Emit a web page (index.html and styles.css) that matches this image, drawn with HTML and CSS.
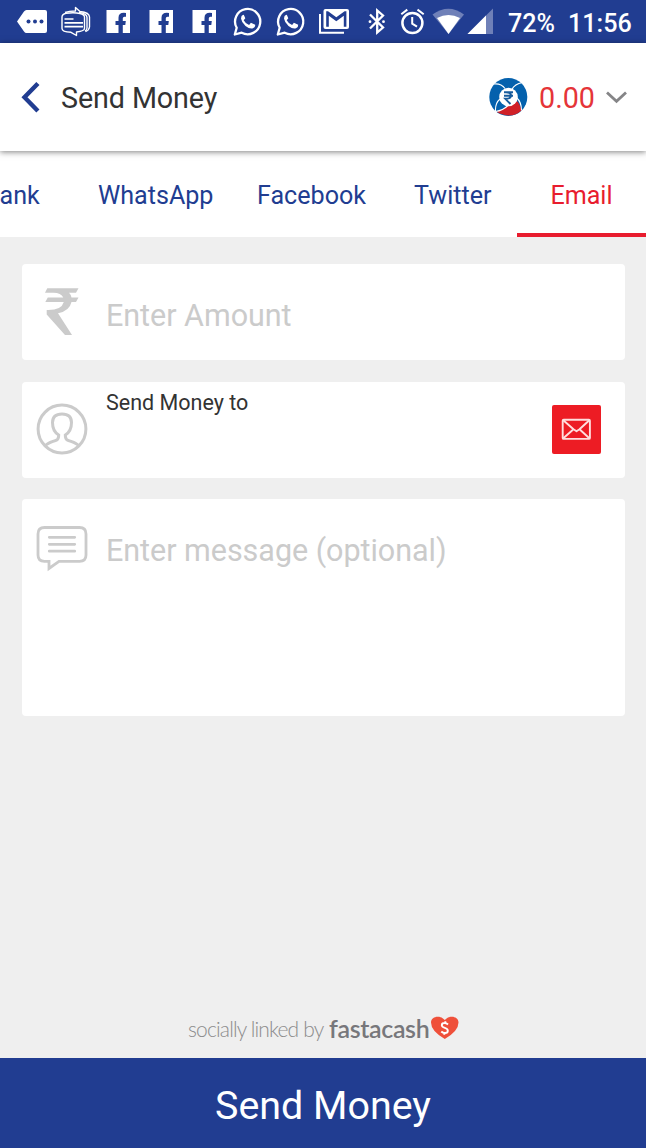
FILE: index.html
```html
<!DOCTYPE html>
<html lang="en">
<head>
<meta charset="utf-8">
<title>Send Money</title>
<link rel="stylesheet" href="styles.css">
</head>
<body>
<div class="screen">
  <div class="status-bar">
    <svg class="status-icon" width="43" height="43" viewBox="11 0 43 43"><path fill="#fff" d="M17 21.500L24 11.500Q25 10 26.500 10H45Q47 10 47 12V31Q47 33 45 33H26.500Q25 33 24 31.500Z"/><g fill="#213d91"><circle cx="28.500" cy="21.500" r="2"/><circle cx="35" cy="21.500" r="2"/><circle cx="41.500" cy="21.500" r="2"/></g></svg>
    <svg class="status-icon" width="43" height="43" viewBox="54 0 43 43"><g fill="none" stroke="#fff" stroke-width="1.400" stroke-linejoin="round"><path d="M65 12.500Q69 11 75.500 11V7.500L80 11.500Q89.500 12.500 89.500 17V27Q89 30.500 85.500 31.500"/><path d="M79 12.500Q87 13.500 87 17.500V28Q87 30 85 31"/><path d="M66 13.300Q74 12 80 13.500Q84.500 14.500 84.500 17V28.500Q84.500 31 76.500 32V35.500L71 32.300Q62 32 62 28.500V17Q62 14.300 66 13.300Z"/></g><path stroke="#fff" stroke-width="1.700" d="M64.500 19H73.500M64.500 22.800H83M64.500 26.600H83"/></svg>
    <svg class="status-icon" width="43" height="43" viewBox="97 0 43 43"><path id="fb" fill="#fff" fill-rule="evenodd" d="M106.500 10H130V33H122.800V25H125.300L125.800 21H122.800V18.300Q122.800 16.700 124.500 16.700H126V13Q118.500 12 118.500 17.800V21H115.500V25H118.500V33H106.500Z"/></svg>
    <svg class="status-icon" width="43" height="43" viewBox="97 0 43 43"><use href="#fb"/></svg>
    <svg class="status-icon" width="43" height="43" viewBox="97 0 43 43"><use href="#fb"/></svg>
    <svg class="status-icon" width="43" height="43" viewBox="226 0 43 43"><g id="wa"><path fill="none" stroke="#fff" stroke-width="2.300" stroke-linejoin="round" d="M234.800 34.500L236.700 27.800A12.600 12.600 0 1 1 241.700 32.700Z"/><path fill="#fff" d="M243.200 14.800Q241 15.500 241 18.600Q241.500 22.500 245.500 26Q250 29.500 253 28.300Q255.500 27.200 255.200 24.800L250.900 22.700L249.100 25Q245.500 23.700 243.700 20.200L245.300 18.300L243.900 14.900Z"/></g></svg>
    <svg class="status-icon" width="43" height="43" viewBox="226 0 43 43"><use href="#wa"/></svg>
    <svg class="status-icon" width="43" height="43" viewBox="312 0 43 43"><path fill="none" stroke="#fff" stroke-width="2" d="M320 14V32.700H344"/><rect x="323.500" y="9" width="25.500" height="20" rx="2" fill="#fff"/><path fill="#213d91" d="M326.200 11.200H328L336.300 17.300L344.600 11.200H346.400V26.800H343.800V15.700L336.300 21.200L328.800 15.700V26.800H326.200Z"/></svg>
    <svg class="status-icon" width="43" height="43" viewBox="355 0 43 43"><path fill="none" stroke="#fff" stroke-width="2.300" d="M370 14.500L383 27.500L377.200 32.500V10.500L383 15.500L370 28.500"/><circle cx="370" cy="21.700" r="1.400" fill="#fff"/><circle cx="383.500" cy="21.700" r="1.400" fill="#fff"/></svg>
    <svg class="status-icon" width="33" height="43" viewBox="398 0 33 43"><circle cx="412.400" cy="23" r="10" fill="none" stroke="#fff" stroke-width="2.500"/><path fill="none" stroke="#fff" stroke-width="2" d="M412.200 17V23.700L417 26.700M401.300 14.300L407.300 9.600M417.500 9.600L423.700 14.300"/></svg>
    <svg class="status-icon" width="35" height="43" viewBox="431 0 35 43"><path fill="#6f80b8" d="M432.500 14.500Q448.500 3 464 14.500L448.500 34Z"/><path fill="#fff" d="M437 18Q448.500 12 460 18L448.500 34Z"/></svg>
    <svg class="status-icon" width="32" height="43" viewBox="466 0 32 43"><path fill="#6f80b8" d="M493 8.500V34H467.500Z"/><path fill="#fff" d="M486 15.500V34H467.500Z"/></svg>
    <span class="battery">72%</span>
    <span class="clock">11:56</span>
  </div>

  <header class="app-bar">
    <svg class="back" width="20" height="32" viewBox="21 81 20 32"><path fill="none" stroke="#213d91" stroke-width="4.400" d="M37.900 83.500L24.500 97.300L37.900 111"/></svg>
    <h1 class="title">Send Money</h1>
    <div class="balance">
      <svg width="40" height="40" viewBox="488 77 40 40"><circle cx="508.300" cy="97" r="19" fill="#0461ad"/><path fill="#d02027" d="M496.500 111.800Q503 110 508 105.500L517 101Q520 104 521.500 110.500Q511 120 496.500 111.800Z"/><g fill="none" stroke="#fff" stroke-width="1.100"><path d="M493.500 84Q501 83 505 88.500M512 89.500Q514.500 84 522.500 82.500M516.500 97.500Q521.500 102 521.500 110.500M500 99Q495 103 495.500 111.500M508 105.500Q503 110.500 495.500 111.500"/></g><circle cx="508.500" cy="97" r="9.300" fill="#fff"/><path fill="none" stroke="#165b9c" stroke-width="1.900" d="M504 92.300H513M504 95.800H513M506 92.300Q511 92.500 511 95.500Q511 98.800 505.300 98.800L510.500 104"/></svg>
      <span class="balance-value">0.00</span>
      <svg class="chevron" width="22" height="14" viewBox="606 90 22 14"><path fill="none" stroke="#858587" stroke-width="2.800" d="M607 92.500L616.500 101.300L626 92.500"/></svg>
    </div>
  </header>

  <nav class="tabs">
    <span class="tab tab-cut">ank</span>
    <span class="tab tab-whatsapp">WhatsApp</span>
    <span class="tab tab-facebook">Facebook</span>
    <span class="tab tab-twitter">Twitter</span>
    <span class="tab tab-active">Email</span>
  </nav>

  <main class="form">
    <div class="card amount">
      <svg class="icon" width="54" height="52" viewBox="35 286 54 52"><path fill="#cbcbcb" d="M47.300 288.200H78.500L76 292.700H69Q71 294.600 71.500 297.500H78.500L76 302H71.500Q69.500 311 58 313.300L72 335H65L46.700 314.500V310Q61.500 310.500 63.800 302H45.300L47.800 297.500H63.300Q61 292.700 53.500 292.700H45Z"/></svg>
      <span class="placeholder">Enter Amount</span>
    </div>
    <div class="card recipient">
      <svg class="icon" width="54" height="54" viewBox="35 402.500 54 54"><g fill="none" stroke="#cbcbcb" stroke-width="3"><circle cx="62" cy="429.500" r="23.900"/><path d="M45.500 446C48 443 53 442.200 57 440.300Q58.700 439.300 58.700 435.500C54.500 433 52.500 428 52.500 423C52.500 417 56 414.500 62 414.500C68 414.500 71.500 417 71.500 423C71.500 428 69.500 433 65.300 435.500Q65.300 439.300 67 440.300C71 442.200 76 443 78.500 446"/></g></svg>
      <span class="label">Send Money to</span>
      <svg class="mail" width="49" height="49" viewBox="0 0 49 49"><rect width="49" height="49" rx="2" fill="#ed1c24"/><g fill="none" stroke="#ffdede" stroke-width="1.900" stroke-linejoin="round"><rect x="10.700" y="14.700" width="27.200" height="19.200" rx="1"/><path d="M11 15L21.500 24.300L24.500 26.300L27.500 24.300L37.600 15M11 33.500L21.500 24.300M27.500 24.300L37.600 33.500"/></g></svg>
    </div>
    <div class="card message">
      <svg class="icon" width="54" height="50" viewBox="35 524 54 50"><g fill="none" stroke="#cbcbcb" stroke-width="2.800"><path d="M44.500 527.500H79.500Q86 527.500 86 534V555Q86 561.300 79.500 561.300H59L49 568.500V561.300H44.500Q38 561.300 38 555V534Q38 527.500 44.500 527.500Z"/><path stroke-linecap="round" d="M49.300 537.300H74.700M49.300 544.300H74.700M49.300 551.200H74.700"/></g></svg>
      <span class="placeholder">Enter message (optional)</span>
    </div>
  </main>

  <div class="powered">
    <span class="linked-by">socially linked by</span>
    <span class="brand">fastacash</span>
    <svg class="heart" width="28" height="23" viewBox="431 1016 28 23"><path fill="#ef503a" d="M444.800 1039Q431 1031 431 1022.500C431 1016 440.500 1014.500 444.800 1020C449 1014.500 458.500 1016 458.500 1022.500Q458.500 1031 444.800 1039Z"/><path fill="none" stroke="#fff" stroke-width="1.900" d="M448 1024.500Q446.500 1023 444.500 1023Q441.800 1023 441.800 1025.300Q441.800 1027 444.800 1027.800Q447.800 1028.700 447.800 1030.700Q447.800 1033 445 1033Q442.700 1033 441.300 1031.500M445.300 1021.300V1023.500M444.300 1032.500V1034.800"/></svg>
  </div>

  <button class="send">Send Money</button>
</div>
</body>
</html>
```
FILE: styles.css
```css
* {
  box-sizing: border-box;
}

body {
  margin: 0;
  font-family: Roboto, "Liberation Sans", sans-serif;
}

svg {
  display: block;
  flex: none;
}

.screen {
  display: flex;
  flex-direction: column;
  width: 646px;
  height: 1148px;
  overflow: hidden;
  background: #efefef;
}

.status-bar {
  display: flex;
  flex: none;
  height: 43px;
  padding-left: 11px;
  background: #213d91;
  color: #fff;
  font-size: 25.100px;
  font-weight: 500;
  line-height: 47px;
  white-space: nowrap;
}

.battery {
  width: 60px;
  padding-left: 10px;
}

.clock {
  margin-left: 10px;
}

.app-bar {
  position: relative;
  display: flex;
  flex: none;
  align-items: center;
  height: 108px;
  padding: 0 18px 0 21px;
  background: #fff;
  box-shadow: 0 1px 6px rgba(0, 0, 0, 0.5);
}

.title {
  margin: 1px 0 0 20px;
  color: #333;
  font-size: 28.700px;
  font-weight: 400;
  letter-spacing: -0.100px;
}

.balance {
  display: flex;
  align-items: center;
  margin-left: auto;
}

.balance-value {
  margin: 2px 11px 0 11px;
  color: #e53538;
  font-size: 28.700px;
}

.tabs {
  display: flex;
  flex: none;
  height: 86px;
  background: #fff;
  color: #213d91;
  font-size: 25.100px;
  line-height: 89px;
  white-space: nowrap;
}

.tab-cut {
  width: 98px;
  text-indent: -0.500px;
}

.tab-whatsapp {
  width: 159px;
}

.tab-facebook {
  width: 157px;
}

.tab-twitter {
  width: 103px;
}

.tab-active {
  flex: 1;
  border-bottom: 4px solid #e81c2e;
  color: #e81c2e;
  text-align: center;
}

.form {
  display: flex;
  flex-direction: column;
  gap: 21.500px;
  padding: 27px 21.500px 0;
}

.card {
  display: flex;
  align-items: flex-start;
  height: 96px;
  padding: 0 24px 0 13.500px;
  border-radius: 4px;
  background: #fff;
}

.icon {
  margin-right: 17px;
}

.amount .icon {
  margin-top: 22px;
}

.placeholder {
  color: #cbcbcb;
  font-size: 30.500px;
  line-height: 36px;
  letter-spacing: -0.030px;
}

.amount .placeholder {
  margin-top: 34px;
}

.recipient .icon {
  margin-top: 20.500px;
}

.label {
  margin-top: 8.500px;
  color: #333;
  font-size: 21.500px;
  line-height: 26px;
}

.mail {
  margin: 23.500px 0 0 auto;
}

.message {
  height: 217px;
}

.message .icon {
  margin-top: 25px;
}

.message .placeholder {
  margin-top: 34px;
}

.powered {
  display: flex;
  align-items: flex-start;
  height: 44px;
  margin-top: auto;
  padding-left: 188px;
  font-family: Lato, sans-serif;
  line-height: 30px;
  white-space: nowrap;
}

.linked-by {
  width: 141px;
  color: #8c8c8c;
  font-size: 21px;
  font-weight: 300;
  letter-spacing: -0.850px;
}

.brand {
  width: 102px;
  margin-top: -1px;
  color: #77777b;
  font-size: 25px;
  font-weight: 600;
  letter-spacing: -0.350px;
}

.heart {
  margin-top: 2px;
}

.send {
  flex: none;
  height: 90px;
  padding: 4px 0 0;
  border: 0;
  background: #213d91;
  color: #fff;
  font-family: inherit;
  font-size: 39.400px;
}
```
